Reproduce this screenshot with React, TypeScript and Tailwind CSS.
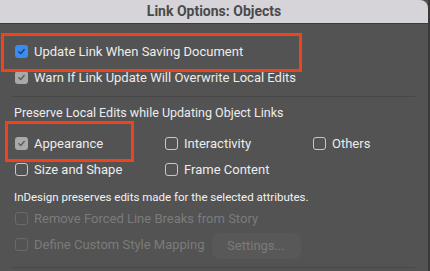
import React from "react";

type CbProps = { state: "blue" | "gray" | "empty"; disabled?: boolean };

function Cb({ state, disabled }: CbProps) {
  if (state === "blue") {
    return (
      <span className="w-[13px] h-[13px] rounded-[3px] bg-[#3b8cf0] flex items-center justify-center shrink-0">
        <svg width="9" height="9" viewBox="0 0 10 10">
          <path d="M2 5.2 L4.2 7.3 L8 2.8" fill="none" stroke="#1d3f75" strokeWidth="1.6" strokeLinecap="round" strokeLinejoin="round" />
        </svg>
      </span>
    );
  }
  if (state === "gray") {
    return (
      <span className="w-[13px] h-[13px] rounded-[3px] bg-[#a9a9a9] flex items-center justify-center shrink-0">
        <svg width="9" height="9" viewBox="0 0 10 10">
          <path d="M2 5.2 L4.2 7.3 L8 2.8" fill="none" stroke="#5d5d5d" strokeWidth="1.6" strokeLinecap="round" strokeLinejoin="round" />
        </svg>
      </span>
    );
  }
  return (
    <span
      className={
        "w-[13px] h-[13px] rounded-[3px] border shrink-0 " +
        (disabled ? "border-[#6a6a6a]" : "border-[#c8c8c8]")
      }
    />
  );
}

function Row({ state, label, disabled, className }: { state: CbProps["state"]; label: string; disabled?: boolean; className?: string }) {
  return (
    <div className={"flex items-center gap-[6px] " + (className ?? "")}>
      <Cb state={state} disabled={disabled} />
      <span className={"text-[13px] leading-none " + (disabled ? "text-[#7b7b7b]" : "text-[#ececec]")}>{label}</span>
    </div>
  );
}

export default function App() {
  return (
    <div
      className="w-[430px] h-[271px] overflow-hidden bg-[#3a3a3a] relative"
      style={{ fontFamily: "Roboto, 'Open Sans', sans-serif" }}
    >
      <div className="w-[428px] h-full bg-[#535353] flex flex-col">
        <div className="h-[24px] bg-[#d6d4d9] rounded-tr-[8px] border-b border-[#3b3b3b] flex items-center justify-center">
          <span className="text-[14px] font-bold text-[#4a4a4a]">Link Options: Objects</span>
        </div>
        <div className="flex flex-col pl-[15px] pr-[13px]">
          <Row state="blue" label="Update Link When Saving Document" className="mt-[21px]" />
          <Row state="gray" label="Warn If Link Update Will Overwrite Local Edits" className="mt-[13px]" />
          <div className="h-px bg-[#474747] mt-[12px] -ml-[2px]" />
          <div className="text-[12.5px] text-[#ececec] leading-none mt-[10px] -ml-[1px]">
            Preserve Local Edits while Updating Object Links
          </div>
          <div className="grid grid-cols-[150px_148px_1fr] gap-y-[13px] mt-[17px]">
            <Row state="gray" label="Appearance" />
            <Row state="empty" label="Interactivity" />
            <Row state="empty" label="Others" />
            <Row state="empty" label="Size and Shape" />
            <Row state="empty" label="Frame Content" />
          </div>
          <div className="text-[11.5px] text-[#f2f2f2] leading-none mt-[16px] -ml-[1px]">
            InDesign preserves edits made for the selected attributes.
          </div>
          <Row state="empty" disabled label="Remove Forced Line Breaks from Story" className="mt-[9px]" />
          <div className="flex items-center mt-[5px]">
            <Row state="empty" disabled label="Define Custom Style Mapping" />
            <div className="ml-[7px] mt-[3px] w-[89px] h-[26px] rounded-[8px] bg-[#585858] flex items-center justify-center text-[13px] text-[#7b7b7b]">
              Settings...
            </div>
          </div>
          <div className="h-px bg-[#474747] mt-[8px] -ml-[2px]" />
        </div>
      </div>
      <div className="absolute left-[1px] top-[33px] w-[301px] h-[39px] border-[3px] border-[#f0421d]" />
      <div className="absolute left-[5px] top-[121px] w-[129px] h-[41px] border-[3px] border-[#f0421d]" />
    </div>
  );
}
